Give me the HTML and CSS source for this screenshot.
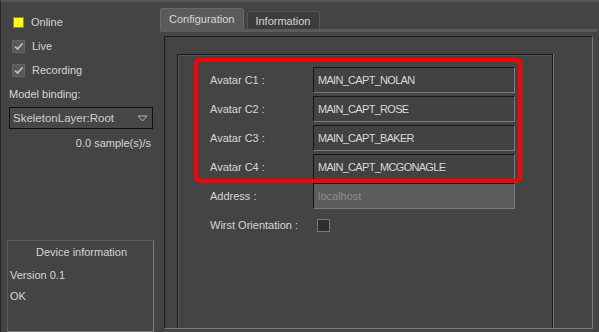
FILE: index.html
```html
<!DOCTYPE html>
<html lang="en">
<head>
    <meta charset="UTF-8">
    <title>Device</title>
    <link rel="stylesheet" href="styles.css">
</head>
<body>

<div class="side">
    <div class="side-row">
        <span class="led"></span>
        <span>Online</span>
    </div>
    <div class="side-row">
        <span class="check">
            <svg width="11" height="11" viewBox="0 0 11 11"><path d="M2 5.5 L4.5 8 L9.5 2.5" fill="none" stroke="#c4c4c4" stroke-width="1.6"/></svg>
        </span>
        <span>Live</span>
    </div>
    <div class="side-row">
        <span class="check">
            <svg width="11" height="11" viewBox="0 0 11 11"><path d="M2 5.5 L4.5 8 L9.5 2.5" fill="none" stroke="#c4c4c4" stroke-width="1.6"/></svg>
        </span>
        <span>Recording</span>
    </div>
    <div class="side-label">Model binding:</div>
    <div class="combo">
        <span>SkeletonLayer:Root</span>
        <svg width="11" height="7" viewBox="0 0 11 7"><path d="M1 1 L10 1 L5.5 6 Z" fill="none" stroke="#b8b8b8" stroke-width="1"/></svg>
    </div>
    <div class="rate">0.0 sample(s)/s</div>

    <div class="device-box">
        <div class="device-title">Device information</div>
        <div class="device-line first">Version 0.1</div>
        <div class="device-line">OK</div>
    </div>
</div>

<div class="main">
    <div class="tabs">
        <div class="tab tab-active">Configuration</div>
        <div class="tab">Information</div>
    </div>
    <div class="pane">
        <div class="frame">
            <div class="group">
                <div class="form">
                    <div class="field-row">
                        <span class="field-label">Avatar C1 :</span>
                        <span class="field-input">MAIN_CAPT_NOLAN</span>
                    </div>
                    <div class="field-row">
                        <span class="field-label">Avatar C2 :</span>
                        <span class="field-input">MAIN_CAPT_ROSE</span>
                    </div>
                    <div class="field-row">
                        <span class="field-label">Avatar C3 :</span>
                        <span class="field-input">MAIN_CAPT_BAKER</span>
                    </div>
                    <div class="field-row">
                        <span class="field-label">Avatar C4 :</span>
                        <span class="field-input">MAIN_CAPT_MCGONAGLE</span>
                    </div>
                    <div class="field-row">
                        <span class="field-label">Address :</span>
                        <span class="field-input field-disabled">localhost</span>
                    </div>
                    <div class="field-row">
                        <span class="field-label">Wirst Orientation :</span>
                        <span class="box-off"></span>
                    </div>
                    <!-- Markierung über den Avatar-Feldern -->
                    <div class="highlight"></div>
                </div>
            </div>
        </div>
    </div>
</div>

</body>
</html>
```

FILE: styles.css
```css
body {
    margin: 0;
    width: 598px;
    height: 330px;
    background-color: #444;
    color: #d6d6d6;
    font-family: "Liberation Sans", Arial, sans-serif;
    font-size: 11px;
    border-top: 2px solid #555;
    border-left: 1px solid #262626;
    display: flex;
    overflow: hidden;
}

/* linke Spalte */
.side {
    width: 154px;
    display: flex;
    flex-direction: column;
    padding-top: 8px;
}
.side-row {
    height: 24px;
    display: flex;
    align-items: center;
    padding-left: 11px;
    gap: 7px;
}
.led {
    width: 11px;
    height: 11px;
    margin-left: 1px;
    background-color: #ffff00;
    border: 1px solid #8a8a30;
    box-sizing: border-box;
}
.check {
    width: 13px;
    height: 13px;
    box-sizing: border-box;
    background-color: #585858;
    border: 1px solid #666;
    display: flex;
    align-items: center;
    justify-content: center;
}
.side-label {
    height: 24px;
    line-height: 24px;
    padding-left: 8px;
}
.combo {
    margin: 1px 0 0 8px;
    width: 144px;
    height: 22px;
    box-sizing: border-box;
    border: 1px solid #111;
    background-color: #474747;
    display: flex;
    align-items: center;
    justify-content: space-between;
    padding: 0 4px 0 3px;
    color: #cfcfcf;
    font-size: 11.5px;
}
.rate {
    margin-top: 5px;
    height: 18px;
    line-height: 18px;
    text-align: right;
    padding-right: 4px;
}
.device-box {
    margin: auto 0 0 6px;
    width: 147px;
    height: 92px;
    box-sizing: border-box;
    border: 1px solid #5c5c5c;
    border-right-color: #7a7a7a;
    border-bottom-color: #7a7a7a;
    padding: 3px 0 0 2px;
}
.device-title {
    height: 16px;
    line-height: 16px;
    text-align: center;
}
.device-line {
    height: 21px;
    line-height: 21px;
}
.device-line.first {
    margin-top: 5px;
}

/* rechter Bereich mit Tabs */
.main {
    flex: 1;
    display: flex;
    flex-direction: column;
    padding-left: 5px;
    padding-right: 2px;
}
.tabs {
    display: flex;
    align-items: flex-end;
    gap: 3px;
    padding-top: 7px;
    height: 20px;
}
.tab {
    height: 17px;
    line-height: 18px;
    padding: 0 9px 0 7px;
    background-color: #3c3c3c;
    border: 1px solid #565656;
    border-bottom: none;
    border-radius: 3px 3px 0 0;
}
.tab-active {
    height: 20px;
    line-height: 21px;
    padding: 0 9px 0 8px;
    background-color: #5a5a5a;
    border-color: #686868;
}
.pane {
    flex: 1;
    border-top: 3px solid #5b5b5b;
    padding: 4px 4px 3px 4px;
    display: flex;
    min-height: 0;
}
.frame {
    flex: 1;
    border: 1px solid #1c1c1c;
    border-right-color: #7a7a7a;
    border-bottom-color: #7a7a7a;
    padding: 17px 39px 0 12px;
    display: flex;
    overflow: hidden;
}
.group {
    flex: 1;
    border: 1px solid #1c1c1c;
    border-bottom: none;
    box-shadow: inset 1px 1px 0 #555, 1px 0 0 #777;
}
.form {
    position: relative;
    padding: 12px 0 0 32px;
    display: flex;
    flex-direction: column;
    gap: 3px;
}
.field-row {
    height: 26px;
    display: flex;
    align-items: center;
}
.field-label {
    width: 103px;
}
.field-input {
    width: 202px;
    height: 26px;
    box-sizing: border-box;
    border: 1px solid #161616;
    border-right-color: #7a7a7a;
    border-bottom-color: #7a7a7a;
    background-color: #424242;
    color: #d8d8d8;
    padding-left: 4px;
    line-height: 24px;
    letter-spacing: -0.7px;
}
.field-disabled {
    background-color: #5c5c5c;
    color: #8c8c8c;
    letter-spacing: 0;
}
.box-off {
    width: 13px;
    height: 13px;
    margin-left: 4px;
    box-sizing: border-box;
    background-color: #2e2e2e;
    border: 1px solid #777;
}
.highlight {
    position: absolute;
    top: 3px;
    left: 16px;
    width: 328px;
    height: 125px;
    box-sizing: border-box;
    border: 4px solid #ff0000;
    border-radius: 6px;
}
```
